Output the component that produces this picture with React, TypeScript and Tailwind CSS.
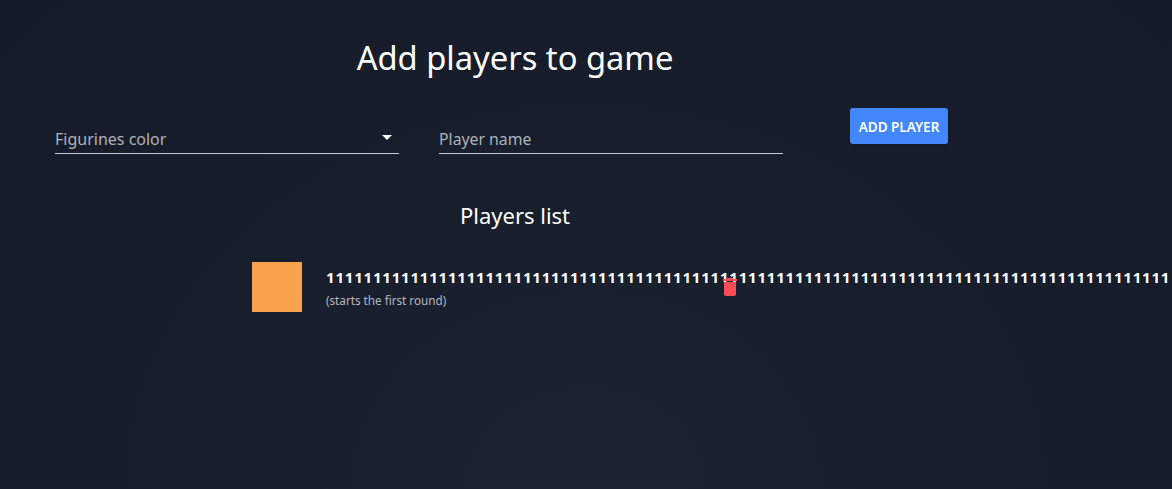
const font = { fontFamily: '"Noto Sans", sans-serif' };

export default function App() {
  return (
    <div
      style={font}
      className="h-[489px] w-[1172px] overflow-hidden bg-[radial-gradient(ellipse_at_50%_100%,#1b2230_0%,#151a27_100%)] text-white"
    >
      <div className="w-[1030px]">
        <h1 className="pt-[35px] text-center text-[32.7px] leading-[46px] font-normal">Add players to game</h1>

        <div className="mt-[27px] flex items-start pl-[55px]">
          <div className="flex h-[46px] w-[344px] items-end justify-between border-b border-[#c9cbd0] pb-[2px]">
            <span className="text-base leading-[24px] text-[#adb2bb]">Figurines color</span>
            <svg width="10" height="5" viewBox="0 0 10 5" className="mr-[7px] mb-[11px]">
              <path d="M0 0h10L5 5z" fill="#fff" />
            </svg>
          </div>
          <div className="ml-[40px] flex h-[46px] w-[344px] items-end border-b border-[#c9cbd0] pb-[2px]">
            <span className="text-[15.8px] leading-[24px] text-[#adb2bb]">Player name</span>
          </div>
          <button className="ml-[67px] h-[36px] w-[98px] rounded-[3px] bg-[#4287fb] pt-[2px] text-[13.5px] font-semibold text-white shadow-md">
            ADD PLAYER
          </button>
        </div>

        <h2 className="mt-[46px] text-center text-[22px] leading-[30px] font-normal">Players list</h2>
      </div>

      <div className="mt-[32px] flex items-start pl-[252px]">
        <div className="h-[50px] w-[50px] shrink-0 bg-[#f7a34b]" />
        <div className="relative ml-[24px] pt-[5px]">
          <div className="text-[15px] leading-[20px] font-bold tracking-[0.8px] whitespace-nowrap">
            {"1".repeat(90)}
          </div>
          <div className="mt-[6px] text-[11.7px] leading-[14px] text-[#b4b7bd]">(starts the first round)</div>
          <svg viewBox="0 0 24 24" className="absolute top-[13px] left-[392px] h-[24px] w-[24px]" fill="#fd4d50">
            <path d="M6 19c0 1.1.9 2 2 2h8c1.1 0 2-.9 2-2V7H6v12zM19 4h-3.5l-1-1h-5l-1 1H5v2h14V4z" />
          </svg>
        </div>
      </div>
    </div>
  );
}
